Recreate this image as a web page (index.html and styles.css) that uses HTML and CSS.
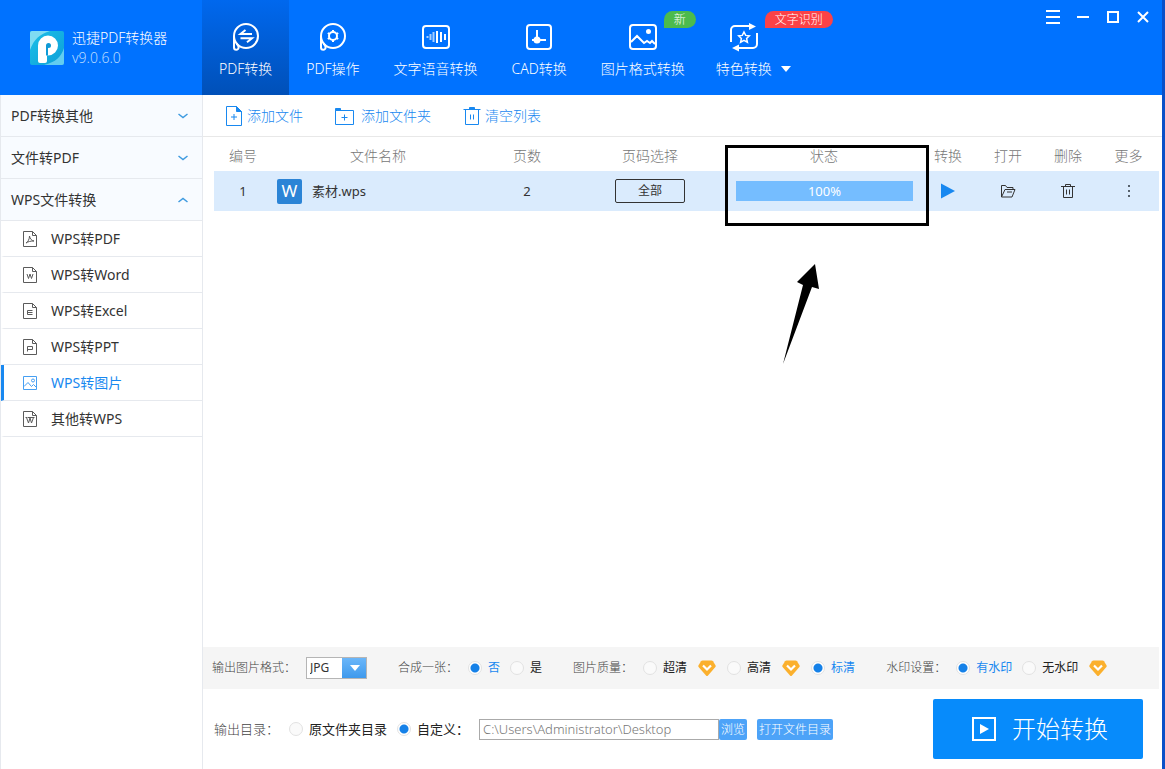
FILE: index.html
```html
<!DOCTYPE html>
<html lang="zh-CN">
<head>
<meta charset="utf-8">
<title>迅捷PDF转换器</title>
<meta name="viewport" content="width=device-width, initial-scale=1">
<link rel="stylesheet" href="styles.css">
</head>
<body>
<svg class="defs" aria-hidden="true">
  <symbol id="down" viewBox="0 0 12 8"><path d="M1.500 2l4.500 3.500L10.500 2" fill="none" stroke="currentColor" stroke-width="1.500"/></symbol>
  <symbol id="page" viewBox="0 0 16 18"><path d="M1.500 1.500h9l4 4v11h-13z M10.500 1.500v4h4" fill="none" stroke="currentColor"/></symbol>
  <symbol id="gem" viewBox="0 0 18 18"><path d="M4.500 1.500h9q1 0 1.500.8L17.600 6.500q.4.700-.2 1.400L10 16.500q-1 1-2 0L.600 7.900Q0 7.200.400 6.500L3 2.300q.5-.8 1.500-.8z" fill="#fbb02d"/><path d="M5 6.500l4 4 4-4" fill="none" stroke="#fff" stroke-width="2.200"/></symbol>
  <symbol id="bubble" viewBox="0 0 30 30"><circle cx="15" cy="14" r="12"/><path d="M3 14v11.500a2.300 2.300 0 1 0 4.600 0c0-1.500-.8-2.700-2-4"/></symbol>
</svg>
<div class="app">
  <header class="header">
    <div class="brand">
      <svg class="logo" viewBox="0 0 34 34" aria-hidden="true">
        <defs><linearGradient id="lg" x1="0" y1="0" x2="1" y2="1"><stop offset="0" stop-color="#1cc0e8"/><stop offset="1" stop-color="#0c9fd8"/></linearGradient></defs>
        <rect width="34" height="34" rx="2" fill="url(#lg)"/>
        <path d="M0 2a2 2 0 0 1 2-2h18C10 3 4 8 0 19z" fill="#7fdcf2"/>
        <path d="M34 17v15a2 2 0 0 1-2 2H14c12-3 17-8 20-17z" fill="#62cdf0"/>
        <path d="M8 30V14.500a10 10 0 1 1 10 10H17V30a2 2 0 0 1-2 2h-5a2 2 0 0 1-2-2z" fill="#fff"/>
        <circle cx="18.500" cy="14.500" r="2.500" fill="#0f9ad6"/><path d="M16 14.500h2v10h-2z" fill="#0f9ad6"/>
      </svg>
      <div class="brand-text"><span>迅捷PDF转换器</span><span class="version">v9.0.6.0</span></div>
    </div>
    <nav class="nav" aria-label="功能">
      <a href="#" class="tab active" aria-current="page">
        <svg class="tab-icon" viewBox="0 0 30 30" aria-hidden="true"><use href="#bubble"/><path d="M21 12H9.500l5-4M9.500 16.300H21l-5 4"/></svg>
        <span>PDF转换</span></a>
      <a href="#" class="tab">
        <svg class="tab-icon" viewBox="0 0 30 30" aria-hidden="true"><use href="#bubble"/><circle cx="15" cy="14" r="4"/><path d="M15 8v2M15 18v2M9.800 11l1.700 1M18.500 16l1.700 1M9.800 17l1.700-1M18.500 12l1.700-1"/></svg>
        <span>PDF操作</span></a>
      <a href="#" class="tab">
        <svg class="tab-icon" viewBox="0 0 30 30" aria-hidden="true"><rect x="2" y="4" width="26" height="22" rx="3"/><path d="M6.500 14v2M9.500 12v6M12.500 10v10" opacity=".65"/><path d="M16 9v12M20 10v10M24 12v6"/></svg>
        <span>文字语音转换</span></a>
      <a href="#" class="tab">
        <svg class="tab-icon" viewBox="0 0 30 30" aria-hidden="true"><rect x="3" y="3" width="24" height="24" rx="3"/><path d="M13 8v12M8 18h14"/><circle cx="13" cy="18" r="2.500" fill="#fff"/></svg>
        <span>CAD转换</span></a>
      <a href="#" class="tab">
        <svg class="tab-icon" viewBox="0 0 30 30" aria-hidden="true"><rect x="2" y="3" width="26" height="24" rx="3"/><path d="M3 20l6-6 7 7 3-2 3 2 2-2 3 3"/><circle cx="20.500" cy="9.500" r="1.500" fill="#fff"/></svg>
        <span>图片格式转换</span><span class="badge new">新</span></a>
      <a href="#" class="tab more">
        <svg class="tab-icon" viewBox="0 0 30 30" aria-hidden="true"><path d="M2 20V8a4 4 0 0 1 4-4h15M28 11v11a4 4 0 0 1-4 4H9"/><path d="M20 1l7 3.500L20 8zM10 22.500L3 26l7 3.500z" fill="#fff" stroke="none"/><path d="M15 10l1.700 3.400 3.600.400-2.700 2.600.800 3.800-3.400-1.900-3.400 1.900.800-3.800-2.700-2.600 3.600-.400z" stroke-width="1.500"/></svg>
        <span>特色转换</span><svg class="caret" viewBox="0 0 10 6" aria-hidden="true"><path d="M0 0h10L5 6z" fill="#fff"/></svg><span class="badge hot">文字识别</span></a>
    </nav>
    <div class="window-controls">
      <button type="button" aria-label="菜单"><svg viewBox="0 0 14 14"><path d="M0 1h14M0 7h14M0 13h14"/></svg></button>
      <button type="button" aria-label="最小化"><svg viewBox="0 0 14 14"><path d="M1 7h12"/></svg></button>
      <button type="button" aria-label="最大化"><svg viewBox="0 0 14 14"><path d="M2 2h10v10H2z"/></svg></button>
      <button type="button" aria-label="关闭"><svg viewBox="0 0 14 14"><path d="M2 2l10 10M12 2L2 12"/></svg></button>
    </div>
  </header>
  <div class="content">
    <aside class="sidebar">
      <button type="button" class="group"><span>PDF转换其他</span><svg class="chev"><use href="#down"/></svg></button>
      <button type="button" class="group"><span>文件转PDF</span><svg class="chev"><use href="#down"/></svg></button>
      <button type="button" class="group" aria-expanded="true"><span>WPS文件转换</span><svg class="chev up"><use href="#down"/></svg></button>
      <a href="#" class="item"><svg class="item-icon" viewBox="0 0 16 18"><use href="#page"/><path d="M4 13c2-1 3.500-4 3.500-7 .5 3 2 4.500 4.500 5-3 0-6 .5-8 2z"/></svg>WPS转PDF</a>
      <a href="#" class="item"><svg class="item-icon" viewBox="0 0 16 18"><use href="#page"/><path d="M5 8l1.500 4.500L8 8l1.500 4.500L11 8"/></svg>WPS转Word</a>
      <a href="#" class="item"><svg class="item-icon" viewBox="0 0 16 18"><use href="#page"/><path d="M10.500 8.500h-5v4h5M5.500 10.500h5"/></svg>WPS转Excel</a>
      <a href="#" class="item"><svg class="item-icon" viewBox="0 0 16 18"><use href="#page"/><path d="M5.500 13.500V8.500h5v3h-5"/></svg>WPS转PPT</a>
      <a href="#" class="item active" aria-current="page"><svg class="item-icon" viewBox="0 0 16 18"><path d="M1.500 2.500h13v13h-13zM2 12.500l4-4 3.500 4 2-2 3 3"/><circle cx="11" cy="6.500" r="1.500"/></svg>WPS转图片</a>
      <a href="#" class="item"><svg class="item-icon" viewBox="0 0 16 18"><use href="#page"/><path d="M3.500 7.500h2M10 7.500h2.500M4.500 7.500l2 5.500L8 8l1.500 5 2-5.500M6 7.500h4"/></svg>其他转WPS</a>
    </aside>
    <main class="main">
      <div class="toolbar">
        <button type="button"><svg class="tool-icon" viewBox="0 0 18 20"><path d="M1.500.500h10l5 5v14h-15z"/><path d="M11.500.500v5h5z" fill="currentColor"/><path d="M9 8v6M6 11h6"/></svg>添加文件</button>
        <button type="button"><svg class="tool-icon folder" viewBox="0 0 20 20"><path d="M.500 4.500h18v14H.500z"/><path d="M.500 2.500h5v2h-5z" fill="currentColor"/><path d="M9.500 8.500v6M6.500 11.500h6"/></svg>添加文件夹</button>
        <button type="button"><svg class="tool-icon" viewBox="0 0 18 20"><path d="M2.500 3.500h13v15h-13zM.500 3.500h17M7.500 8.500v5M10.500 8.500v5"/><path d="M6.500 1.500h5v2h-5z" fill="currentColor"/></svg>清空列表</button>
      </div>
      <div class="list">
        <table class="files">
          <colgroup><col class="c-no"><col class="c-name"><col class="c-pages"><col class="c-range"><col class="c-status"><col class="c-act"><col class="c-act"><col class="c-act"><col class="c-more"></colgroup>
          <thead><tr><th>编号</th><th>文件名称</th><th>页数</th><th>页码选择</th><th>状态</th><th>转换</th><th>打开</th><th>删除</th><th>更多</th></tr></thead>
          <tbody><tr>
            <td>1</td>
            <td><div class="file-name"><span class="wps">W</span><span>素材.wps</span></div></td>
            <td>2</td>
            <td><button type="button" class="range">全部</button></td>
            <td class="status"><div class="progress">100%</div>
              <div class="callout"></div>
              <svg class="arrow" viewBox="0 0 40 102" aria-hidden="true"><path d="M34 1l4 25-7-2L2 101l20-79-6-3z"/></svg>
            </td>
            <td><button type="button" class="act" aria-label="转换"><svg viewBox="0 0 16 16"><path d="M1 .500L15 8 1 15.500z" fill="#1888f0" stroke="none"/></svg></button></td>
            <td><button type="button" class="act" aria-label="打开"><svg viewBox="0 0 16 16"><path d="M1.500 14V2.500h4l1.500 2h6v2M1.500 14l3.500-7.500h10L12 14zM7 9h5"/></svg></button></td>
            <td><button type="button" class="act" aria-label="删除"><svg viewBox="0 0 16 16"><path d="M1 3.500h14M5.500 3V1.500h5V3M3.500 3.500v11h9v-11M6.500 6.500v5M9.500 6.500v5"/></svg></button></td>
            <td><button type="button" class="act" aria-label="更多"><svg viewBox="0 0 16 16"><path d="M7 2h2v2H7zM7 7h2v2H7zM7 12h2v2H7z" fill="#56616c" stroke="none"/></svg></button></td>
          </tr></tbody>
        </table>
      </div>
      <div class="options">
        <div class="field"><label class="caption" for="format">输出图片格式：</label>
          <div class="select"><select id="format"><option>JPG</option><option>PNG</option></select><svg viewBox="0 0 10 6" aria-hidden="true"><path d="M0 0h10L5 6z" fill="#fff"/></svg></div></div>
        <div class="field" role="radiogroup" aria-label="合成一张"><span class="caption">合成一张：</span>
          <label class="radio"><input type="radio" name="merge" checked><span>否</span></label>
          <label class="radio"><input type="radio" name="merge"><span>是</span></label></div>
        <div class="field" role="radiogroup" aria-label="图片质量"><span class="caption">图片质量：</span>
          <label class="radio"><input type="radio" name="quality"><span>超清</span></label><svg class="gem"><use href="#gem"/></svg>
          <label class="radio"><input type="radio" name="quality"><span>高清</span></label><svg class="gem"><use href="#gem"/></svg>
          <label class="radio"><input type="radio" name="quality" checked><span>标清</span></label></div>
        <div class="field" role="radiogroup" aria-label="水印设置"><span class="caption">水印设置：</span>
          <label class="radio"><input type="radio" name="mark" checked><span>有水印</span></label>
          <label class="radio"><input type="radio" name="mark"><span>无水印</span></label><svg class="gem"><use href="#gem"/></svg></div>
      </div>
      <div class="output">
        <span class="caption">输出目录：</span>
        <label class="radio"><input type="radio" name="dir"><span>原文件夹目录</span></label>
        <label class="radio"><input type="radio" name="dir" checked><span>自定义：</span></label>
        <div class="path"><input type="text" value="C:\Users\Administrator\Desktop" aria-label="输出目录"><button type="button" class="small">浏览</button></div>
        <button type="button" class="small">打开文件目录</button>
        <button type="button" class="start"><svg viewBox="0 0 24 24" aria-hidden="true"><path d="M1 1h22v22H1z" fill="none" stroke="#fff" stroke-width="2"/><path d="M8 7l9 5-9 5z" fill="#fff"/></svg>开始转换</button>
      </div>
    </main>
  </div>
</div>
</body>
</html>
```
FILE: styles.css
```css
* { box-sizing: border-box; }
body {
  margin: 0;
  font: 300 14px/20px "Noto Sans", "Noto Sans CJK SC", sans-serif;
  color: #333;
  background: #fff;
}
button, input, select { font: inherit; color: inherit; margin: 0; }
button { padding: 0; border: 0; background: none; cursor: pointer; white-space: nowrap; }
a { color: inherit; text-decoration: none; }
svg { flex: none; display: block; }
.defs { position: absolute; width: 0; height: 0; }

.app { display: flex; flex-direction: column; min-height: 100vh; border-right: 3px solid #0a50c8; }

.header { display: flex; height: 95px; background: #0072ff; color: #fff; }
.brand { display: flex; gap: 8px; width: 202px; padding: 28px 0 0 30px; white-space: nowrap; }
.logo { width: 34px; height: 34px; margin-top: 3px; }
.brand-text { display: flex; flex-direction: column; }
.version { color: #b8dbff; }
.nav { display: flex; flex: 1; }
.tab {
  position: relative;
  display: grid;
  grid-template-columns: auto auto;
  align-content: start;
  justify-items: center;
  row-gap: 7px;
  padding: 22px 17px 0;
  white-space: nowrap;
}
.tab.more { padding-left: 14px; }
.tab.active { background: linear-gradient(#0068ee, #0050b8); }
.tab-icon { width: 30px; height: 30px; grid-column: 1; fill: none; stroke: #fff; stroke-width: 2; }
.tab > span:not(.badge) { grid-column: 1; }
.caret { width: 10px; height: 6px; margin-left: 9px; align-self: center; }
.badge {
  position: absolute;
  top: 11px;
  height: 17px;
  padding: 0 10px;
  border-radius: 9px 9px 9px 0;
  font-size: 12px;
  line-height: 17px;
}
.badge.new { left: 80px; background: #4cbb4c; }
.badge.hot { left: 63px; background: #fb4247; }
.window-controls { display: flex; gap: 16px; padding: 10px 12px 0 0; align-items: flex-start; }
.window-controls svg { width: 14px; height: 14px; fill: none; stroke: #fff; stroke-width: 2; }

.content { display: flex; flex: 1; }
.sidebar {
  display: flex;
  flex-direction: column;
  width: 203px;
  border: solid #e6e9ee;
  border-width: 0 1px;
  font-weight: 400;
}
.group {
  display: flex;
  justify-content: space-between;
  align-items: center;
  height: 42px;
  padding: 0 13px 0 10px;
  border-bottom: 1px solid #e6e9ee;
  background: #f8fbff;
}
.chev { width: 12px; height: 8px; color: #3f9be0; }
.chev.up { transform: rotate(180deg); }
.item {
  display: flex;
  align-items: center;
  gap: 13px;
  height: 36px;
  padding-left: 18px;
  border-bottom: 1px solid #e6e9ee;
  border-left: 3px solid transparent;
}
.item.active { color: #1888f0; border-left-color: #1888f0; }
.item-icon { width: 16px; height: 18px; fill: none; stroke: currentColor; opacity: .8; }

.main { display: flex; flex-direction: column; flex: 1; min-width: 0; }
.toolbar { display: flex; gap: 32px; height: 42px; padding: 0 22px; border-bottom: 1px solid #e8e8e8; color: #1888f0; }
.toolbar button { display: flex; align-items: center; gap: 4px; }
.tool-icon { width: 18px; height: 20px; fill: none; stroke: currentColor; }
.tool-icon.folder { width: 20px; margin-right: 2px; }

.list { flex: 1; padding: 0 3px 0 11px; }
.files { width: 100%; table-layout: fixed; border-collapse: collapse; text-align: center; }
.c-no { width: 58px; }
.c-pages { width: 86px; }
.c-range { width: 160px; }
.c-status { width: 188px; }
.c-act { width: 60px; }
.c-more { width: 61px; }
.files th { height: 34px; padding: 4px 0 0; font-weight: 300; color: #777; }
.files td { height: 40px; padding: 0; background: #daebfd; font-size: 13px; font-weight: 400; }
.file-name { display: flex; align-items: center; gap: 10px; padding-left: 5px; }
.wps { width: 25px; height: 25px; border-radius: 2px; background: #2b84d6; color: #fff; font-size: 17px; line-height: 24px; }
.range { width: 70px; height: 24px; border: 1px solid #333; border-radius: 2px; font-size: 12px; line-height: 22px; vertical-align: middle; }
.files .status { position: relative; padding: 0 5px 0 6px; }
.progress { height: 20px; background: #75bdff; color: #fff; line-height: 20px; }
.callout { position: absolute; left: -5px; top: -26px; width: 204px; height: 81px; border: 3px solid #000; }
.arrow { position: absolute; left: 51px; top: 92px; width: 40px; height: 102px; }
.act { display: block; margin: 0 auto; }
.act svg { width: 16px; height: 16px; fill: none; stroke: #333; }

.options { display: flex; align-items: center; gap: 31px; height: 42px; margin-right: 3px; padding-left: 9px; background: #f5f5f5; font-size: 12px; white-space: nowrap; }
.field { display: flex; align-items: center; gap: 10px; }
.caption { color: #444; }
.select { display: grid; grid-template-columns: 36px 25px; align-items: center; }
.select select {
  grid-area: 1 / 1 / 2 / 3;
  height: 22px;
  padding: 0 0 0 3px;
  border: 1px solid #b5b5b5;
  border-radius: 0;
  appearance: none;
  background: linear-gradient(#6db8fa, #3c98ec) right / 25px 100% no-repeat border-box #fff;
  font-weight: 400;
}
.select svg { grid-area: 1 / 2; justify-self: center; width: 10px; height: 6px; pointer-events: none; }
.radio { display: flex; align-items: center; gap: 6px; color: #222; font-weight: 400; }
.radio input { appearance: none; width: 14px; height: 14px; border: 1px solid #e2e2e2; border-radius: 50%; background: #fafafa; }
.radio input:checked { background: radial-gradient(circle, #1581e8 4px, #fff 5px); }
.options .radio input:checked + span { color: #1888f0; }
.gem { width: 18px; height: 18px; margin: 0 1px; }

.output { display: flex; align-items: center; gap: 10px; height: 80px; padding: 0 19px 0 11px; font-size: 13px; white-space: nowrap; }
.path { display: flex; }
.path input { width: 240px; height: 21px; padding: 0 3px; border: 1px solid #aaa; color: #777; }
.small { height: 21px; padding: 0 2px; border-radius: 2px; background: #4da3f8; color: #fff; font-size: 12px; line-height: 21px; }
.start {
  display: flex;
  align-items: center;
  justify-content: center;
  gap: 16px;
  width: 210px;
  height: 60px;
  margin-left: auto;
  padding-left: 4px;
  border-radius: 2px;
  background: #078bfb;
  color: #fff;
  font-size: 24px;
}
.start svg { width: 24px; height: 24px; }
```
